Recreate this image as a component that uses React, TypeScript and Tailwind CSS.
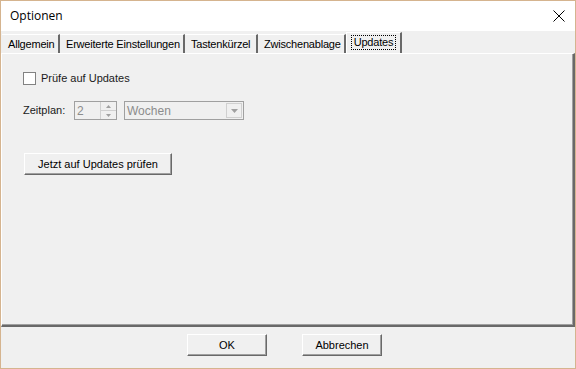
import React from "react";

const font = { fontFamily: '"Liberation Sans", Arial, sans-serif' };

function Tab({ label, w, selected }: { label: string; w: number; selected?: boolean }) {
  if (selected) {
    return (
      <div
        className="relative h-[21px] flex items-start justify-center pt-[2px] border-t border-l border-white border-r-2 border-r-[#696969] bg-[#f0f0f0] z-10 -mb-[1px] whitespace-nowrap tracking-[-0.2px]"
        style={{ width: w }}
      >
        <span className="px-[2px] border border-dotted border-black leading-[13px] h-[15px]">{label}</span>
      </div>
    );
  }
  return (
    <div
      className="h-[19px] mt-[2px] flex items-center pl-[6px] border-t border-white border-r-2 border-r-[#696969] whitespace-nowrap overflow-hidden tracking-[-0.2px]"
      style={{ width: w }}
    >
      <span className="leading-[13px]">{label}</span>
    </div>
  );
}

function Btn({ label, w }: { label: string; w: number }) {
  return (
    <div
      className="h-[22px] flex items-center justify-center bg-[#f0f0f0] border border-t-white border-l-white border-r-[#696969] border-b-[#696969] shadow-[inset_-1px_-1px_0_#a0a0a0] whitespace-nowrap"
      style={{ width: w }}
    >
      <span className="text-[11px] text-black">{label}</span>
    </div>
  );
}

export default function App() {
  return (
    <div
      className="w-[576px] h-[369px] bg-[#f0f0f0] border border-[#d5b48f] flex flex-col text-[11px] text-black"
      style={font}
    >
      {/* Title bar */}
      <div className="h-[30px] bg-white flex items-center justify-between pl-[9px] pr-[9px] shrink-0">
        <span className="text-[12px] text-black" style={{ fontFamily: '"Open Sans", "Liberation Sans", sans-serif' }}>
          Optionen
        </span>
        <svg width="12" height="12" viewBox="0 0 12 12" className="mr-[1px]">
          <path d="M0.5 0.5 L11.5 11.5 M11.5 0.5 L0.5 11.5" stroke="#000" strokeWidth="1" />
        </svg>
      </div>

      {/* Tabs */}
      <div className="flex pl-[1px] mt-[1px] shrink-0">
        <Tab label="Allgemein" w={58} />
        <Tab label="Erweiterte Einstellungen" w={125} />
        <Tab label="Tastenkürzel" w={73} />
        <Tab label="Zwischenablage" w={88} />
        <Tab label="Updates" w={56} selected />
      </div>

      {/* Panel */}
      <div className="h-[274px] border-t border-l border-white border-r-2 border-r-[#696969] border-b-2 border-b-[#696969] shadow-[inset_-1px_-1px_0_#a0a0a0] flex flex-col pl-[21px] shrink-0">
        <div className="flex items-center mt-[18px] h-[13px]">
          <div className="w-[13px] h-[13px] bg-white border border-[#828282]" />
          <span className="ml-[5px] text-[#1a1a1a]">Prüfe auf Updates</span>
        </div>

        <div className="flex items-center mt-[16px] h-[19px]">
          <span className="w-[51px] text-[#1a1a1a]">Zeitplan:</span>
          <div className="w-[43px] h-[19px] flex border border-[#a0a0a0] bg-[#f0f0f0]">
            <div className="flex-1 flex items-center pl-[2px] text-[#8c8c8c] text-[12px]">2</div>
            <div className="w-[16px] flex flex-col border-l border-[#d0d0d0]">
              <div className="flex-1 flex items-center justify-center border-b border-[#d0d0d0]">
                <svg width="5" height="3" viewBox="0 0 5 3"><path d="M2.5 0 L5 3 L0 3 Z" fill="#a0a0a0" /></svg>
              </div>
              <div className="flex-1 flex items-center justify-center">
                <svg width="5" height="3" viewBox="0 0 5 3"><path d="M0 0 L5 0 L2.5 3 Z" fill="#a0a0a0" /></svg>
              </div>
            </div>
          </div>
          <div className="ml-[7px] w-[120px] h-[19px] flex border border-[#a0a0a0] bg-[#f0f0f0]">
            <div className="flex-1 flex items-center pl-[2px] text-[#8c8c8c] text-[12px]">Wochen</div>
            <div className="w-[16px] m-[1px] flex items-center justify-center border border-[#d0d0d0]">
              <svg width="7" height="4" viewBox="0 0 7 4"><path d="M0 0 L7 0 L3.5 4 Z" fill="#a0a0a0" /></svg>
            </div>
          </div>
        </div>

        <div className="mt-[33px] ml-[1px]">
          <Btn label="Jetzt auf Updates prüfen" w={148} />
        </div>
      </div>

      {/* Bottom */}
      <div className="flex-1 flex items-start pt-[7px] pl-[186px] gap-[35px]">
        <Btn label="OK" w={80} />
        <Btn label="Abbrechen" w={80} />
      </div>
    </div>
  );
}
